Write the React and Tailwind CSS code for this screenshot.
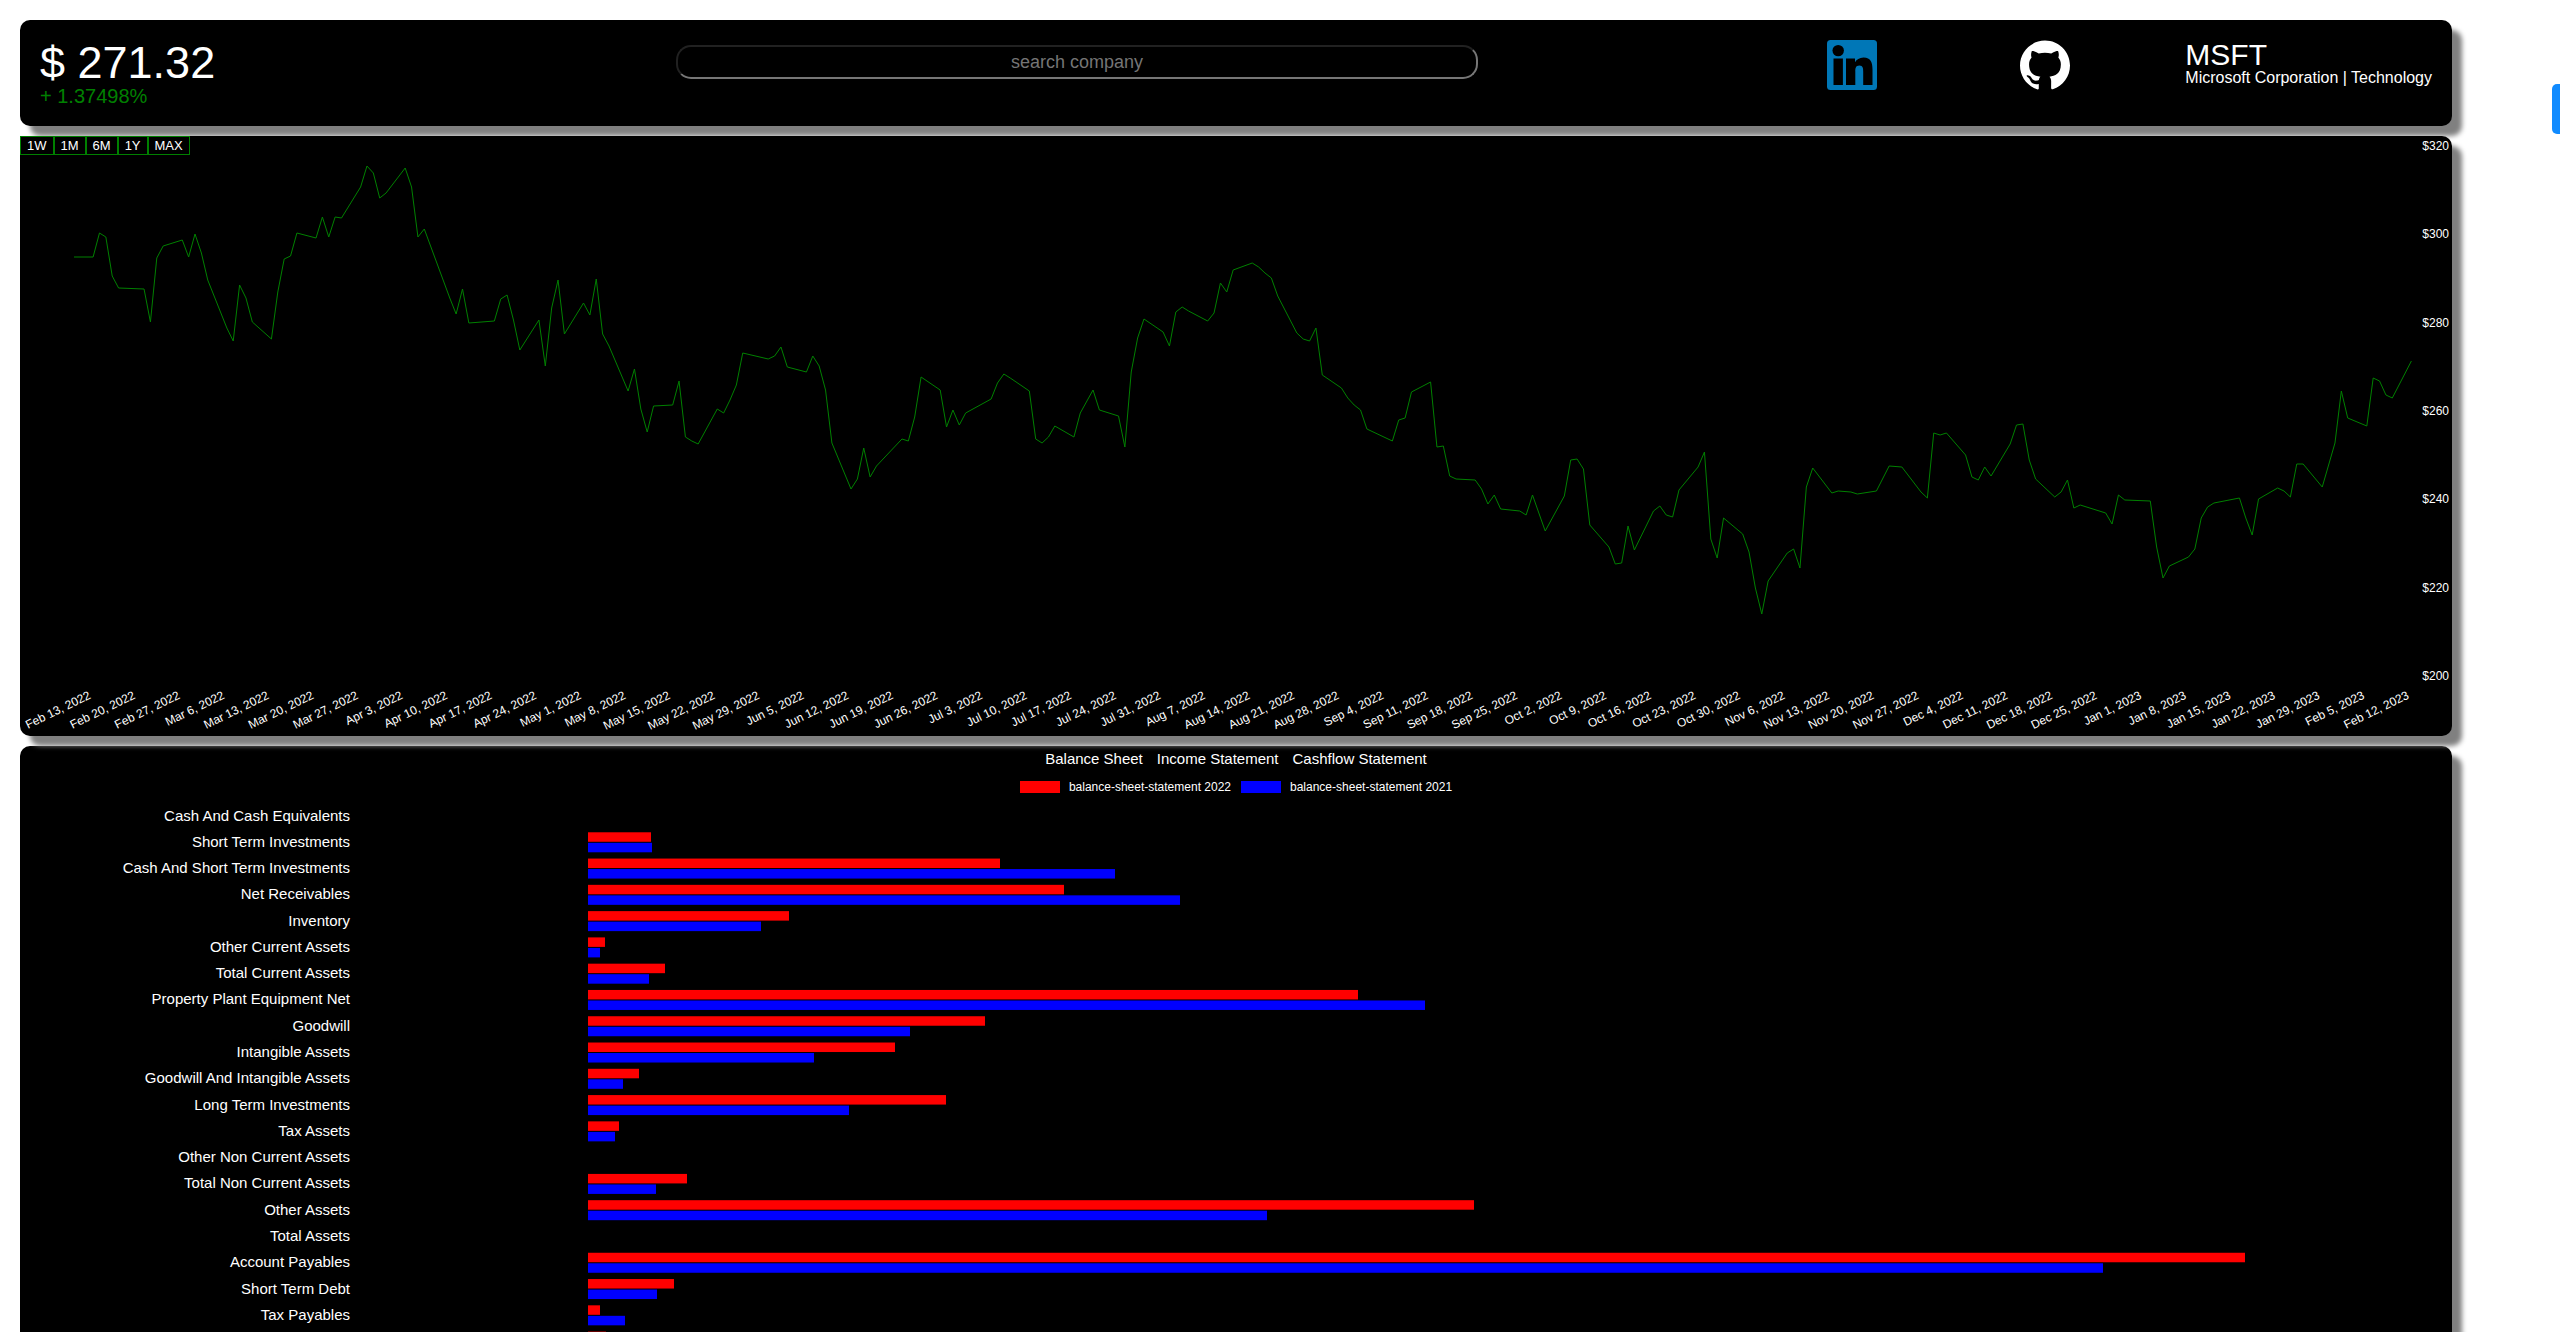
import React from "react";
import { SiGithub } from "react-icons/si";

// [day offset, vertical position inside the price chart]
const PRICE_LINE = [
  [0, 121], [3, 121], [4, 97], [5, 101], [6, 140], [7, 152], [11, 153], [12, 186], [13, 122], [14, 110],
  [17, 104], [18, 121], [19, 98], [20, 117], [21, 144], [24, 192], [25, 205], [26, 149], [27, 162], [28, 186],
  [31, 203], [32, 156], [33, 123], [34, 120], [35, 97], [38, 102], [39, 81], [40, 101], [41, 81], [42, 82],
  [45, 51], [46, 30], [47, 37], [48, 62], [49, 57], [52, 32], [53, 51], [54, 101], [55, 93], [59, 162],
  [60, 178], [61, 153], [62, 187], [66, 185], [67, 163], [68, 159], [69, 184], [70, 214], [73, 184], [74, 230],
  [75, 172], [76, 144], [77, 198], [80, 167], [81, 179], [82, 143], [83, 198], [84, 210], [87, 255], [88, 233],
  [89, 273], [90, 296], [91, 270], [94, 269], [95, 245], [96, 301], [97, 305], [98, 308], [101, 273], [102, 277],
  [103, 264], [104, 249], [105, 217], [109, 223], [110, 220], [111, 211], [112, 231], [115, 236], [116, 220], [117, 230],
  [118, 254], [119, 307], [122, 353], [123, 343], [124, 312], [125, 341], [126, 330], [130, 303], [131, 305], [132, 281],
  [133, 241], [136, 254], [137, 291], [138, 274], [139, 289], [140, 277], [144, 263], [145, 247], [146, 238], [147, 242],
  [150, 255], [151, 303], [152, 307], [153, 301], [154, 290], [157, 301], [158, 277], [160, 254], [161, 274], [164, 280],
  [165, 311], [166, 236], [167, 202], [168, 183], [171, 196], [172, 210], [173, 176], [174, 171], [175, 175], [178, 185],
  [179, 177], [180, 147], [181, 156], [182, 134], [185, 127], [186, 131], [187, 137], [188, 142], [189, 160], [192, 197],
  [193, 203], [194, 205], [195, 192], [196, 239], [199, 252], [200, 262], [201, 269], [202, 274], [203, 293], [207, 305],
  [208, 284], [209, 282], [210, 256], [213, 246], [214, 311], [215, 310], [216, 340], [217, 343], [220, 344], [221, 353],
  [222, 368], [223, 359], [224, 373], [227, 375], [228, 379], [229, 359], [230, 377], [231, 395], [234, 360], [235, 324],
  [236, 323], [237, 333], [238, 389], [241, 411], [242, 428], [243, 427], [244, 390], [245, 414], [248, 375], [249, 370],
  [250, 379], [251, 381], [252, 354], [255, 331], [256, 316], [257, 403], [258, 422], [259, 382], [262, 398], [263, 416],
  [264, 452], [265, 478], [266, 445], [269, 417], [270, 413], [271, 432], [272, 351], [273, 332], [276, 357], [277, 355],
  [279, 356], [280, 358], [283, 355], [285, 330], [287, 331], [290, 356], [291, 362], [292, 297], [293, 299], [294, 297],
  [297, 319], [298, 341], [299, 344], [300, 331], [301, 340], [304, 308], [305, 289], [306, 288], [307, 324], [308, 343],
  [311, 361], [312, 356], [313, 344], [314, 372], [315, 369], [319, 377], [320, 388], [321, 359], [322, 364], [326, 365],
  [327, 411], [328, 442], [329, 430], [332, 421], [333, 413], [334, 382], [335, 371], [336, 367], [340, 362], [341, 382],
  [342, 399], [343, 363], [346, 352], [347, 355], [348, 361], [349, 328], [350, 328], [353, 351], [355, 307], [356, 255],
  [357, 282], [360, 290], [361, 242], [362, 245], [363, 259], [364, 262], [367, 225],
];

const DAY_WIDTH = 2337.4 / 367;

const WEEKS = [
  "Feb 13, 2022", "Feb 20, 2022", "Feb 27, 2022", "Mar 6, 2022", "Mar 13, 2022", "Mar 20, 2022", "Mar 27, 2022",
  "Apr 3, 2022", "Apr 10, 2022", "Apr 17, 2022", "Apr 24, 2022", "May 1, 2022", "May 8, 2022", "May 15, 2022",
  "May 22, 2022", "May 29, 2022", "Jun 5, 2022", "Jun 12, 2022", "Jun 19, 2022", "Jun 26, 2022", "Jul 3, 2022",
  "Jul 10, 2022", "Jul 17, 2022", "Jul 24, 2022", "Jul 31, 2022", "Aug 7, 2022", "Aug 14, 2022", "Aug 21, 2022",
  "Aug 28, 2022", "Sep 4, 2022", "Sep 11, 2022", "Sep 18, 2022", "Sep 25, 2022", "Oct 2, 2022", "Oct 9, 2022",
  "Oct 16, 2022", "Oct 23, 2022", "Oct 30, 2022", "Nov 6, 2022", "Nov 13, 2022", "Nov 20, 2022", "Nov 27, 2022",
  "Dec 4, 2022", "Dec 11, 2022", "Dec 18, 2022", "Dec 25, 2022", "Jan 1, 2023", "Jan 8, 2023", "Jan 15, 2023",
  "Jan 22, 2023", "Jan 29, 2023", "Feb 5, 2023", "Feb 12, 2023",
];

const PRICES = ["$320", "$300", "$280", "$260", "$240", "$220", "$200"];

// [label, 2022 bar length, 2021 bar length]
const BALANCE = [
  ["Cash And Cash Equivalents", 0, 0],
  ["Short Term Investments", 63, 64],
  ["Cash And Short Term Investments", 412, 527],
  ["Net Receivables", 476, 592],
  ["Inventory", 201, 173],
  ["Other Current Assets", 17, 12],
  ["Total Current Assets", 77, 61],
  ["Property Plant Equipment Net", 770, 837],
  ["Goodwill", 397, 322],
  ["Intangible Assets", 307, 226],
  ["Goodwill And Intangible Assets", 51, 35],
  ["Long Term Investments", 358, 261],
  ["Tax Assets", 31, 27],
  ["Other Non Current Assets", 0, 0],
  ["Total Non Current Assets", 99, 68],
  ["Other Assets", 886, 679],
  ["Total Assets", 0, 0],
  ["Account Payables", 1657, 1515],
  ["Short Term Debt", 86, 69],
  ["Tax Payables", 12, 37],
  ["", 18, 18],
];

const ROW_PITCH = 26.28;

const CARD = "rounded-[10px] bg-black text-white shadow-[10px_10px_5px_#808080]";

function LinkedInLogo() {
  return (
    <svg viewBox="0 0 50 50" className="block size-[50px]" aria-hidden="true">
      <rect width="50" height="50" rx="3.5" fill="#0077b7" />
      <circle cx="11.2" cy="10.6" r="5.7" fill="#000" />
      <path
        fill="#000"
        d="M6.5 18.4h9.4V45H6.5zM19 18.4h9v3.6h.2c1.3-2.4 4.2-4.6 8.3-4.6 7.5 0 9 5 9 12.2V45h-9.3V31.8c0-3.2-.1-6.4-3.8-6.4-3.9 0-4.1 3-4.1 6.2V45H19z"
      />
    </svg>
  );
}

function Header() {
  return (
    <header className={`grid grid-cols-[636fr_802fr_399fr_193fr_362fr] items-start px-5 pt-5 pb-[18px] ${CARD}`}>
      <div>
        <div className="text-[45px] leading-[45px]">$ 271.32</div>
        <div className="text-[20px] leading-[23px] text-[#008000]">+ 1.37498%</div>
      </div>
      <input
        type="text"
        aria-label="search company"
        placeholder="search company"
        className="mt-[5px] h-[34px] w-full rounded-[15px] border-2 border-t-[#212121] border-r-[#767676] border-b-[#767676] border-l-[#212121] bg-black text-center text-[18px] text-white placeholder:text-[#757575]"
      />
      <a href="#linkedin" aria-label="LinkedIn" className="justify-self-end">
        <LinkedInLogo />
      </a>
      <a href="#github" aria-label="GitHub" className="justify-self-end">
        <SiGithub className="block size-[50px] text-white" />
      </a>
      <div className="justify-self-end whitespace-nowrap">
        <div className="text-[30px] leading-[30px]">MSFT</div>
        <div className="text-[16px] leading-[16px]">Microsoft Corporation | Technology</div>
      </div>
    </header>
  );
}

function PriceChart() {
  const points = PRICE_LINE.map(([day, y]) => `${54 + day * DAY_WIDTH},${y}`).join(" ");
  return (
    <section className={`relative ${CARD}`}>
      <div className="absolute top-0 left-0 flex bg-black">
        {["1W", "1M", "6M", "1Y", "MAX"].map((range) => (
          <button
            key={range}
            type="button"
            className="border border-[#008000] bg-black px-[6px] py-px text-[13px] leading-[15px]"
          >
            {range}
          </button>
        ))}
      </div>
      <svg viewBox="0 0 2432 600" className="block w-full text-[12px]" fill="#fff">
        <polyline points={points} fill="none" stroke="#008000" strokeWidth="1" />
        {PRICES.map((price, i) => (
          <text key={price} x="2429" y={14 + i * 88.3} textAnchor="end">
            {price}
          </text>
        ))}
        {WEEKS.map((week, i) => (
          <text
            key={week}
            textAnchor="end"
            transform={`translate(${71.5 + i * 7 * DAY_WIDTH} 562) rotate(-26)`}
          >
            {week}
          </text>
        ))}
      </svg>
    </section>
  );
}

function Statements() {
  return (
    <section className={CARD}>
      <nav className="flex justify-center pt-1">
        {["Balance Sheet", "Income Statement", "Cashflow Statement"].map((name) => (
          <button key={name} type="button" className="px-[7px] text-[15px] leading-[18px]">
            {name}
          </button>
        ))}
      </nav>
      <div className="mt-[13px] flex justify-center gap-[10px] text-[12px] leading-[12px]">
        <div className="flex gap-[9px]">
          <span className="h-3 w-10 bg-[#ff0000]" />
          balance-sheet-statement 2022
        </div>
        <div className="flex gap-[9px]">
          <span className="h-3 w-10 bg-[#0000ff]" />
          balance-sheet-statement 2021
        </div>
      </div>
      <svg viewBox="0 0 2432 580" className="block w-full text-[15px]" fill="#fff">
        {BALANCE.map(([label, current, previous], i) => (
          <g key={label} transform={`translate(0 ${i * ROW_PITCH})`}>
            <text x="330" y="27.5" textAnchor="end">
              {label}
            </text>
            <rect x="568" y="13" width={current} height="9.5" fill="#ff0000" />
            <rect x="568" y="23.5" width={previous} height="9.5" fill="#0000ff" />
          </g>
        ))}
      </svg>
    </section>
  );
}

export default function App() {
  return (
    <div className="relative h-screen overflow-hidden bg-white pt-5 pl-5 font-['Liberation_Sans',Arial,sans-serif]">
      <main className="mr-[108px] flex flex-col gap-[10px]">
        <Header />
        <PriceChart />
        <Statements />
      </main>
      <button
        type="button"
        aria-label="Open panel"
        className="absolute top-[84px] right-0 h-[50px] w-2 rounded-l-[5px] bg-[#118bff]"
      />
    </div>
  );
}
